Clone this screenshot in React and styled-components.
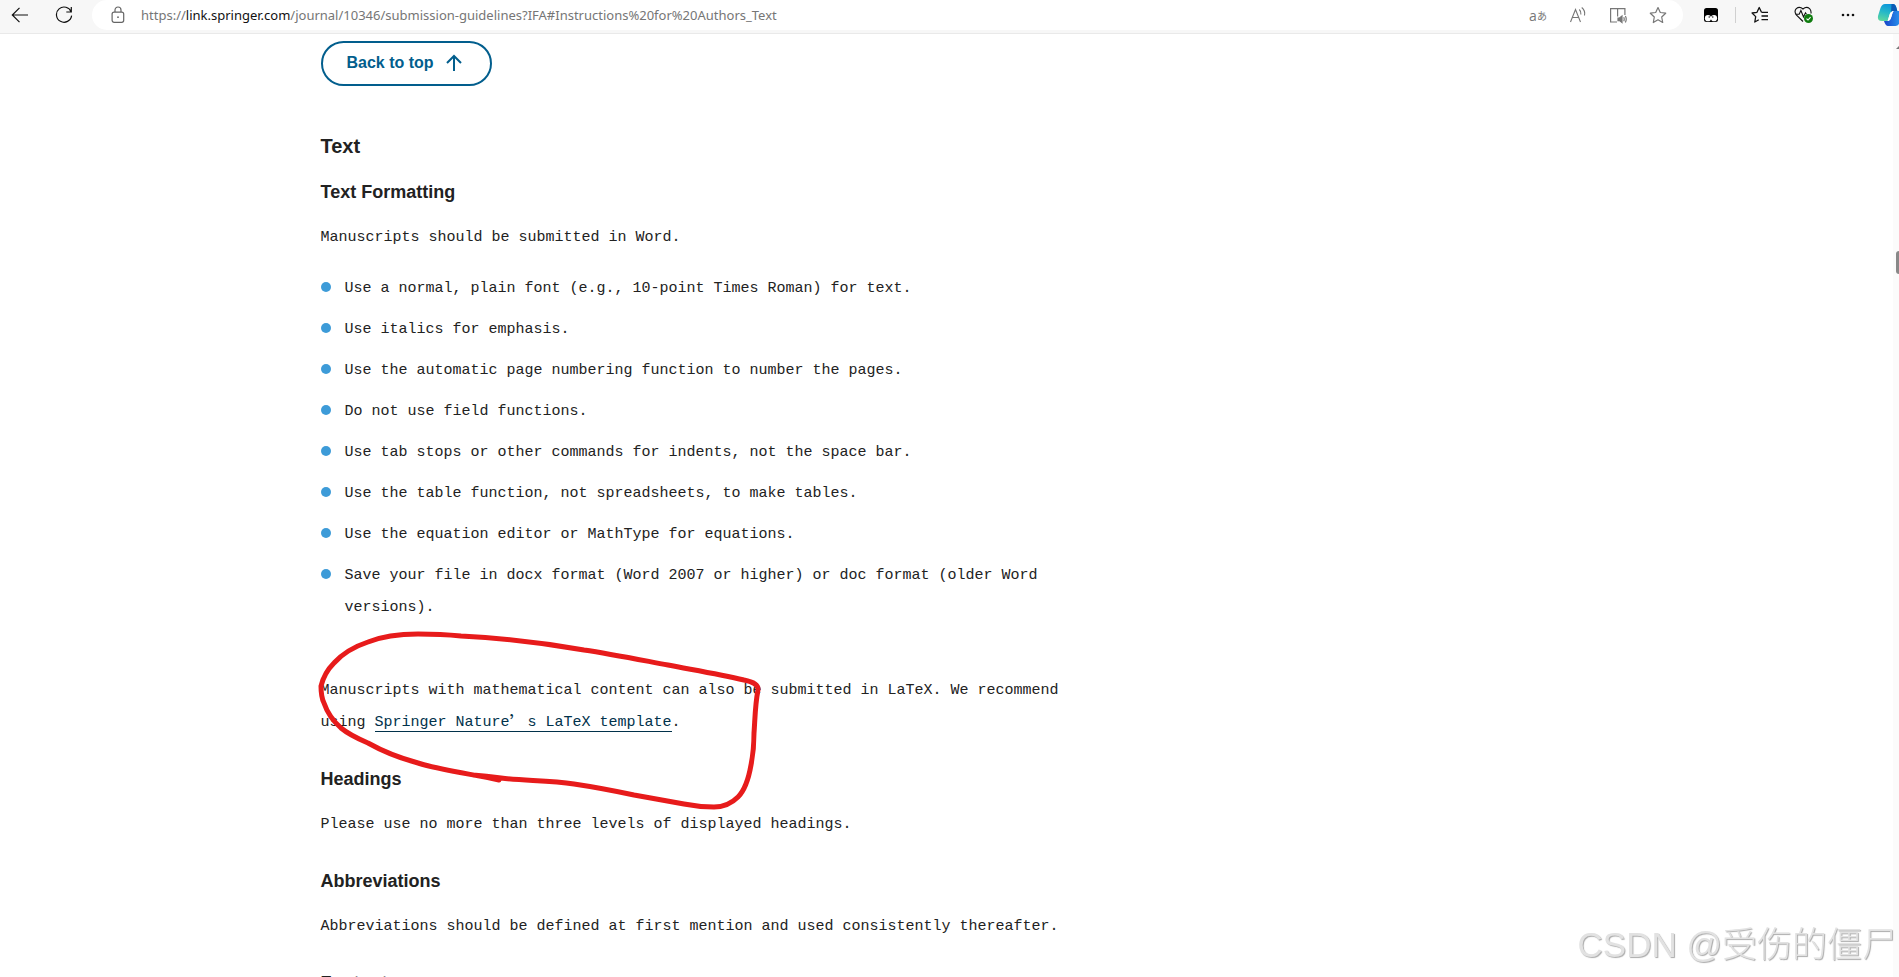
import React from "react";
import styled, { createGlobalStyle } from "styled-components";

const GlobalStyle = createGlobalStyle`
  * {
    box-sizing: border-box;
  }
  body {
    margin: 0;
    background: #fff;
    color: #222;
  }
`;

const rules = [
  "Use a normal, plain font (e.g., 10-point Times Roman) for text.",
  "Use italics for emphasis.",
  "Use the automatic page numbering function to number the pages.",
  "Do not use field functions.",
  "Use tab stops or other commands for indents, not the space bar.",
  "Use the table function, not spreadsheets, to make tables.",
  "Use the equation editor or MathType for equations.",
  "Save your file in docx format (Word 2007 or higher) or doc format (older Word versions).",
];

const BackIcon = () => (
  <svg width="18" height="18" viewBox="0 0 18 18" fill="none" stroke="#111" strokeWidth="1.2">
    <path d="M17 9H1.5M8.5 1.8L1.3 9l7.2 7.2" />
  </svg>
);

const ReloadIcon = () => (
  <svg width="18" height="18" viewBox="0 0 18 18" fill="none" stroke="#111" strokeWidth="1.2">
    <path d="M16.2 6A7.6 7.6 0 1 0 16.6 9.6M16.3 1v5h-5" />
  </svg>
);

const LockIcon = () => (
  <svg width="14" height="18" viewBox="0 0 14 18" fill="none" stroke="#666" strokeWidth="1.2">
    <rect x="1.1" y="6.1" width="11.6" height="10.2" rx="2" />
    <path d="M4 6V4a3 3 0 0 1 6 0v2" />
    <circle cx="7" cy="11.2" r="0.9" fill="#666" stroke="none" />
  </svg>
);

const ReadAloudIcon = () => (
  <svg width="18" height="18" viewBox="0 0 18 18" fill="none" stroke="#777" strokeWidth="1.1">
    <path d="M1.5 16L6.500 3.500l5 12.500M3.200 11.500h6.600M10.300 3.500q2 1.800 1.600 5M12.700 1.500q3.800 3 2.800 8" />
  </svg>
);

const ReaderIcon = () => (
  <svg width="18" height="18" viewBox="0 0 18 18" fill="none" stroke="#777" strokeWidth="1.2">
    <path d="M8 16H1.600V2.600H8.600V10.500M8.600 2.600H15.900V9" />
    <path d="M9 12h1.500l2.500-2v6.600l-2.500-2H9z" fill="#777" />
    <path d="M14.700 11.200q1 1.900 0 4M16.400 10q1.700 3 0 6.400" />
  </svg>
);

const StarIcon = () => (
  <svg width="18" height="18" viewBox="0 0 18 18" fill="none" stroke="#777" strokeWidth="1.2" strokeLinejoin="round">
    <path d="M9 1.500l2.300 5 5.400.7-4 3.800 1 5.500L9 13.800l-4.700 2.700 1-5.500L1.300 7.200l5.400-.7z" />
  </svg>
);

const ExtensionIcon = () => (
  <svg width="16" height="16" viewBox="0 0 16 16">
    <rect x="1" y="1" width="14" height="14" rx="2.500" fill="#000" />
    <circle cx="5" cy="11.200" r="3.100" fill="#fff" />
    <circle cx="11" cy="11.200" r="3.100" fill="#fff" />
    <circle cx="6.200" cy="10" r="0.700" />
    <circle cx="9.800" cy="10" r="0.700" />
  </svg>
);

const FavoritesIcon = () => (
  <svg width="18" height="18" viewBox="0 0 18 18" fill="none" stroke="#111" strokeWidth="1.300" strokeLinejoin="round">
    <path d="M10.500 6.300L8.200 1.500 6 6.300l-4.900.7 3.600 3.600-.9 5.400 4-2.200M10.500 6.300H17M10.500 10H17M10.500 13.700H17" />
  </svg>
);

const HealthIcon = () => (
  <svg width="20" height="18" viewBox="0 0 20 18" fill="none" stroke="#111" strokeWidth="1.100">
    <path d="M9 15.500L2.300 8.800Q-.2 5.200 2.300 2.600 5.600-.1 9 3q3.400-3.100 6.600-.4Q17.400 4.500 17 7.500" />
    <path d="M1.500 8.200h3.700l1.700-3.700 2.600 6.500 2-4.200 1 1.400" />
    <circle cx="14.500" cy="12.500" r="4.500" fill="#107c10" stroke="none" />
    <path d="M12.500 12.600l1.500 1.400 2.600-2.800" stroke="#fff" />
  </svg>
);

const MoreIcon = () => (
  <svg width="16" height="18" viewBox="0 0 16 18" fill="#111">
    <circle cx="3" cy="9" r="1.300" />
    <circle cx="8" cy="9" r="1.300" />
    <circle cx="13" cy="9" r="1.300" />
  </svg>
);

const CopilotIcon = () => (
  <svg width="26" height="24" viewBox="0 0 26 24">
    <defs>
      <linearGradient id="teal" x1="0.6" y1="0" x2="0.3" y2="1">
        <stop offset="0" stopColor="#0a94dc" />
        <stop offset="0.5" stopColor="#25b8c8" />
        <stop offset="1" stopColor="#5cd6a0" />
      </linearGradient>
      <linearGradient id="blue" x1="0" y1="0" x2="1" y2="0">
        <stop offset="0" stopColor="#1743c8" />
        <stop offset="1" stopColor="#2a9cf2" />
      </linearGradient>
    </defs>
    <path d="M8 1h8q2.500 0 3.500 4l.8 3h-3.800q-3 0-4 3.500L10.800 18H5q-5 0-4-5l2.500-8Q5 1 8 1z" fill="url(#teal)" />
    <path d="M14.500 1H16q2.500 0 3.500 4l.8 3h-3.800q-1.500 0-2.500 1z" fill="#0a5bb5" />
    <path d="M7 18h3.500q2.800 0 3.800-4l1.500-5 .9-1h5.300q4 0 3 5l-2 6q-1.500 4-4.500 4H11q-2.500 0-4-5z" fill="url(#blue)" />
    <path d="M16.800 8q-3 0-4 3.500L10.500 18q2.800 0 3.800-4l1.600-5z" fill="#fff" />
  </svg>
);

const Browser = styled.div`
  display: flex;
  flex-direction: column;
  height: 100vh;
  overflow: hidden;
`;

const Toolbar = styled.header`
  display: flex;
  flex: none;
  align-items: flex-start;
  height: 34px;
  background: #f7f7f7;
  border-bottom: 1px solid #e9e9e9;
  overflow: hidden;
`;

const IconButton = styled.button`
  display: flex;
  flex: none;
  align-items: center;
  justify-content: center;
  width: ${(props) => props.$width || 40}px;
  height: 30px;
  padding: 0;
  border: none;
  background: transparent;
  color: #777;
  font: 14px "Open Sans", "Noto Sans CJK JP", sans-serif;

  small {
    font-size: 10px;
  }
`;

// The icon runs past the right edge of the window
const CopilotButton = styled(IconButton)`
  justify-content: flex-start;
  padding-left: 9px;

  svg {
    flex: none;
  }
`;

const AddressBar = styled.div`
  display: flex;
  flex: 1;
  align-items: center;
  height: 30px;
  margin: 0 8px 0 4px;
  padding: 0 5px 0 8px;
  border-radius: 15px;
  background: #fff;
`;

const Url = styled.a`
  flex: 1;
  margin-left: 5px;
  color: #767676;
  font: 13px/30px "Noto Sans", "Open Sans", sans-serif;
  text-decoration: none;
  white-space: nowrap;

  b {
    color: #111;
    font-weight: 400;
  }
`;

const Divider = styled.span`
  width: 1px;
  height: 16px;
  margin: 7px 4px 0;
  background: #d0d0d0;
`;

const Viewport = styled.div`
  display: flex;
  flex: 1;
  min-height: 0;
`;

const Page = styled.main`
  flex: 1;
  overflow: hidden;
`;

const Content = styled.div`
  max-width: 1252px;
  margin: 0 auto;
`;

const Article = styled.article`
  position: relative;
  max-width: 750px;
  padding-top: 7px;
`;

const BackToTop = styled.button`
  display: flex;
  align-items: center;
  gap: 12px;
  height: 45px;
  padding: 0 28px 2px 24px;
  border: 2px solid #025e8d;
  border-radius: 23px;
  background: #fff;
  color: #025e8d;
  font: bold 16px "Liberation Sans", Arial, sans-serif;
`;

const Title = styled.h2`
  margin: 44px 0 0;
  font: bold 20px/32px "Liberation Sans", Arial, sans-serif;
`;

const Subtitle = styled.h3`
  margin: ${(props) => props.$top || 24}px 0 14px;
  font: bold 18px/32px "Liberation Sans", Arial, sans-serif;
`;

const Paragraph = styled.p`
  margin: ${(props) => props.$top || 0}px 0 0;
  font: 15px/32px "Liberation Mono", "Courier New", monospace;
`;

const List = styled.ul`
  display: flex;
  flex-direction: column;
  gap: 9px;
  margin: 19px 0 0;
  padding: 0;
  list-style: none;
`;

const Item = styled.li`
  display: flex;
  gap: 14px;
  font: 15px/32px "Liberation Mono", "Courier New", monospace;

  &::before {
    content: "";
    flex: none;
    width: 10px;
    height: 10px;
    margin-top: 9px;
    border-radius: 50%;
    background: #3d9bd8;
  }
`;

const TextLink = styled.a`
  color: #01324b;
  text-decoration: none;
  border-bottom: 1px solid #01324b;
`;

const WideQuote = styled.span`
  font: 18px/18px "Noto Sans CJK SC", sans-serif;
  vertical-align: middle;
`;

const Marker = styled.svg`
  position: absolute;
  top: 590px;
  left: -20px;
  pointer-events: none;
`;

const Scrollbar = styled.div`
  display: flex;
  flex: none;
  flex-direction: column;
  align-items: flex-end;
  width: 6px;
  background: #fbfbfb;
`;

const ScrollArrow = styled.span`
  width: 0;
  height: 0;
  margin-top: 12px;
  border-bottom: 3px solid #777;
  border-left: 3px solid transparent;
`;

const ScrollThumb = styled.span`
  width: 3px;
  height: 23px;
  margin-top: 202px;
  border-radius: 3px 0 0 3px;
  background: #888;
`;

const Watermark = styled.div`
  position: fixed;
  right: 2px;
  bottom: 8px;
  color: #e2e2e2;
  font: 300 35px/48px "Liberation Sans", "Noto Sans CJK SC", sans-serif;
  text-shadow: 1px 1px 1px #aaa;
  white-space: nowrap;
`;

export default function App() {
  return (
    <Browser>
      <GlobalStyle />
      <Toolbar>
        <IconButton aria-label="Back"><BackIcon /></IconButton>
        <IconButton $width={48} aria-label="Refresh"><ReloadIcon /></IconButton>
        <AddressBar>
          <IconButton $width={36} aria-label="Site information"><LockIcon /></IconButton>
          <Url href="#Instructions">
            https://<b>link.springer.com</b>
            /journal/10346/submission-guidelines?IFA#Instructions%20for%20Authors_Text
          </Url>
          <IconButton aria-label="Translate">a<small>あ</small></IconButton>
          <IconButton aria-label="Read aloud"><ReadAloudIcon /></IconButton>
          <IconButton aria-label="Immersive reader"><ReaderIcon /></IconButton>
          <IconButton aria-label="Add to favorites"><StarIcon /></IconButton>
        </AddressBar>
        <IconButton aria-label="Extension"><ExtensionIcon /></IconButton>
        <Divider />
        <IconButton aria-label="Favorites"><FavoritesIcon /></IconButton>
        <IconButton $width={48} aria-label="Browser essentials"><HealthIcon /></IconButton>
        <IconButton aria-label="More"><MoreIcon /></IconButton>
        <CopilotButton $width={31} aria-label="Copilot"><CopilotIcon /></CopilotButton>
      </Toolbar>
      <Viewport>
        <Page>
          <Content>
            <Article>
              <BackToTop>
                Back to top
                <svg width="16" height="18" viewBox="0 0 16 18" fill="none" stroke="#025e8d" strokeWidth="2">
                  <path d="M8 17V2M1 9l7-7 7 7" />
                </svg>
              </BackToTop>
              <Title>Text</Title>
              <Subtitle $top={14}>Text Formatting</Subtitle>
              <Paragraph>Manuscripts should be submitted in Word.</Paragraph>
              <List>
                {rules.map((rule) => (
                  <Item key={rule}>{rule}</Item>
                ))}
              </List>
              <Paragraph $top={51}>
                Manuscripts with mathematical content can also be submitted in LaTeX. We recommend using{" "}
                <TextLink href="#latex">
                  Springer Nature<WideQuote lang="zh-CN">’</WideQuote>s LaTeX template
                </TextLink>
                .
              </Paragraph>
              <Subtitle>Headings</Subtitle>
              <Paragraph>Please use no more than three levels of displayed headings.</Paragraph>
              <Subtitle>Abbreviations</Subtitle>
              <Paragraph>Abbreviations should be defined at first mention and used consistently thereafter.</Paragraph>
              <Subtitle>Footnotes</Subtitle>
              <Marker width="470" height="190" viewBox="300 624 470 190" fill="none" stroke="#e71b1b" strokeWidth="5" strokeLinecap="round" strokeLinejoin="round">
                <path d="M498 780C470 774 440 770 417 763C395 757 383 752 367 743C353 737 346 733 340 728C331 720 326 712 323 703C320 697 320 692 320 686C322 678 326 670 333 663C342 653 352 647 367 642C382 636 398 634 417 634Q440 634 460 636C500 638 543 643 583 650C610 654 640 660 667 665C693 670 718 674 743 680Q758 683 757 690C754 705 754 720 753 733C753 745 752 755 750 765Q746 788 737 797C730 804 723 807 713 807Q698 807 683 804C667 801 650 798 633 795Q600 788 573 784C548 780 522 781 500 778Q485 776 472 775" />
              </Marker>
            </Article>
          </Content>
        </Page>
        <Scrollbar>
          <ScrollArrow />
          <ScrollThumb />
        </Scrollbar>
      </Viewport>
      <Watermark>CSDN @受伤的僵尸</Watermark>
    </Browser>
  );
}
